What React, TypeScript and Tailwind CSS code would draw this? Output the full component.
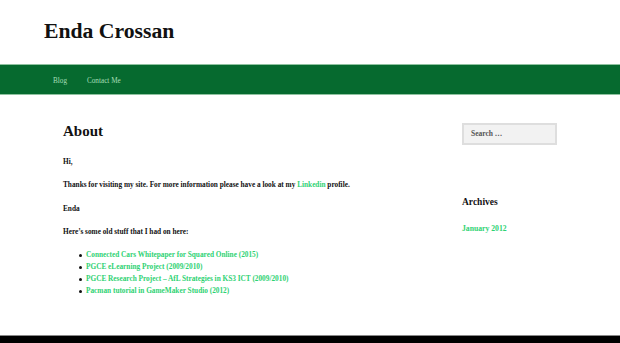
import React from "react";

const serif = { fontFamily: '"Liberation Serif", "Times New Roman", serif' };

export default function App() {
  const items = [
    "Connected Cars Whitepaper for Squared Online (2015)",
    "PGCE eLearning Project (2009/2010)",
    "PGCE Research Project – AfL Strategies in KS3 ICT (2009/2010)",
    "Pacman tutorial in GameMaker Studio (2012)",
  ];
  return (
    <div style={serif} className="w-[620px] bg-white text-[#111]">
      <header className="h-[64px] flex items-center pl-[44px]">
        <h1 className="text-[21.7px] font-bold leading-none text-[#111]">Enda Crossan</h1>
      </header>
      <nav className="h-[31px] bg-[#066a2f] border-t border-b border-[#8fc2a0] flex items-center pl-[53px] pt-[3px] gap-[20px] text-[7.2px] text-[#a6dfb8]">
        <span>Blog</span>
        <span>Contact Me</span>
      </nav>
      <div className="h-[240px] flex">
        <main className="w-[462px] pl-[63px] pt-[26px]">
          <h2 className="text-[15px] leading-[20px] font-bold">About</h2>
          <div className="mt-[15px] text-[7.3px] leading-[12px] font-bold flex flex-col gap-[11.3px]">
            <p>Hi,</p>
            <p>
              Thanks for visiting my site. For more information please have a look at my{" "}
              <span className="text-[#2ed273]">Linkedin</span> profile.
            </p>
            <p>Enda</p>
            <p>Here’s some old stuff that I had on here:</p>
            <ul className="flex flex-col">
              {items.map((t) => (
                <li key={t} className="flex items-center">
                  <span className="w-[23px] flex justify-end pr-[4px]">
                    <span className="w-[3px] h-[3px] rounded-full bg-[#111]" />
                  </span>
                  <span className="text-[#2ed273]">{t}</span>
                </li>
              ))}
            </ul>
          </div>
        </main>
        <aside className="pt-[28px] w-[95px]">
          <div className="h-[22px] bg-[#f2f2f2] border-2 border-[#dedede] flex items-center pl-[7px] text-[7.5px] text-[#555] font-bold">
            Search …
          </div>
          <h3 className="mt-[51px] text-[9.5px] leading-[12px] font-bold">Archives</h3>
          <div className="mt-[15px] text-[7.7px] leading-[12px] font-bold text-[#2ed273]">January 2012</div>
        </aside>
      </div>
      <footer className="h-[40px] bg-black border-t border-[#888]" />
    </div>
  );
}
